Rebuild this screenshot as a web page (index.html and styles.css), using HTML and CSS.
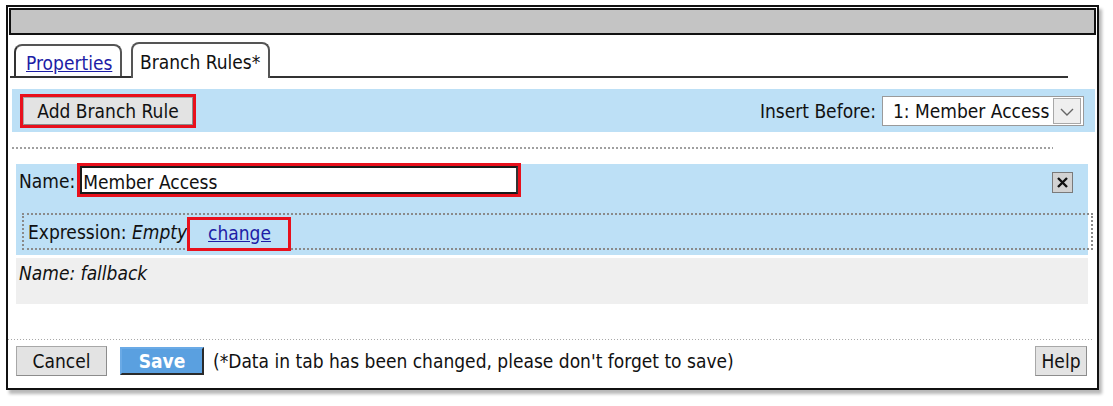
FILE: index.html
```html
<!DOCTYPE html>
<html>
<head>
<meta charset="utf-8">
<link rel="stylesheet" href="styles.css">
</head>
<body>
<div class="desk">
  <div class="dialog">
    <div class="titlebar"></div>
    <div class="tabs">
      <div class="tab tab-inactive"><a href="#" class="link">Properties</a></div>
      <div class="tab tab-active">Branch Rules*</div>
    </div>
    <div class="toolbar">
      <button class="btn btn-add hl">Add Branch Rule</button>
      <div class="insert">
        <span class="insert-label">Insert Before:</span>
        <div class="select">
          <span class="select-text">1: Member Access</span>
          <span class="select-arrow">
            <svg width="14" height="8" viewBox="0 0 14 8"><path d="M1 1 L7 7 L13 1" fill="none" stroke="#666" stroke-width="1.4"/></svg>
          </span>
        </div>
      </div>
    </div>
    <div class="dots dots-top"></div>
    <div class="rule">
      <div class="name-row">
        <span class="label">Name:</span>
        <div class="input-wrap hl-box"><div class="input">Member Access</div></div>
        <span class="close">
          <svg width="13" height="13" viewBox="0 0 13 13"><path d="M2 2 L11 11 M11 2 L2 11" stroke="#111" stroke-width="2.4"/></svg>
        </span>
      </div>
      <div class="expr">
        <span class="label">Expression: <i>Empty</i></span>
        <span class="change-wrap hl-box"><a href="#" class="link">change</a></span>
      </div>
    </div>
    <div class="fallback"><i>Name: fallback</i></div>
    <div class="dots dots-bottom"></div>
    <div class="footer">
      <button class="btn btn-cancel">Cancel</button>
      <button class="btn btn-save">Save</button>
      <span class="note">(*Data in tab has been changed, please don't forget to save)</span>
      <button class="btn btn-help">Help</button>
    </div>
  </div>
</div>
</body>
</html>
```
FILE: styles.css
```css
* { box-sizing: border-box; }
html, body { margin: 0; padding: 0; background: #fff; }
body {
  font-family: "DejaVu Sans Condensed", "DejaVu Sans", sans-serif;
  font-stretch: condensed;
  font-size: 19px;
  color: #111;
}
.desk { padding: 5px 0 0 6px; width: 1113px; height: 406px; overflow: hidden; }
.dialog {
  width: 1093px;
  height: 385px;
  border: 2px solid #111;
  background: #fff;
  box-shadow: 3px 4px 3px rgba(0,0,0,0.28);
  display: flex;
  flex-direction: column;
}
.titlebar {
  margin: 1px 1px 0 1px;
  height: 27px;
  border: 2px solid #111;
  background: #c4c4c4;
}
.tabs {
  margin: 9px 0 0 2px;
  width: 1058px;
  height: 34px;
  border-bottom: 2px solid #333;
  display: flex;
  align-items: flex-end;
  padding-left: 4px;
  gap: 9px;
}
.tab {
  height: 33px;
  border: 2px solid #555;
  border-bottom: none;
  border-radius: 8px 8px 0 0;
  padding: 6px 0 0 10px;
  background: #fff;
  white-space: nowrap;
}
.tab-inactive { width: 108px; height: 32px; border-left-color: #333; }
.tab-active { width: 139px; height: 36px; margin-bottom: -2px; padding-left: 7px; padding-top: 7px; }
.link { color: #1d1da6; text-decoration: underline; }
.toolbar {
  margin: 11px 2px 0 4px;
  height: 43px;
  background: #bde0f6;
  display: flex;
  align-items: center;
  justify-content: space-between;
  padding: 0 11px 0 11px;
}
.btn {
  font-family: inherit;
  font-stretch: condensed;
  font-size: 19px;
  color: #111;
  background: #e3e3e3;
  border: 1px solid #a8a8a8;
  border-right-color: #8c8c8c;
  border-bottom-color: #8c8c8c;
  padding: 0;
  cursor: default;
}
.btn-add { width: 170px; height: 28px; margin-top: 1px; }
.hl { outline: 3px solid #e8101c; outline-offset: 0; }
.insert { display: flex; align-items: center; gap: 6px; }
.select {
  width: 202px;
  height: 30px;
  background: #fff;
  border: 1px solid #9a9a9a;
  display: flex;
  align-items: center;
  justify-content: space-between;
  padding: 0 2px 0 10px;
}
.select-arrow {
  width: 28px;
  height: 26px;
  border: 1px solid #a8a8a8;
  background: #efefef;
  display: flex;
  align-items: center;
  justify-content: center;
  padding-top: 3px;
}
.dots {
  height: 2px;
  background: repeating-linear-gradient(90deg, #a0a0a0 0 2px, transparent 2px 4px);
}
.dots-top { margin: 15px 0 0 4px; width: 1041px; }
.rule {
  margin: 15px 0 0 8px;
  width: 1072px;
  background: #bde0f6;
  padding-bottom: 5px;
}
.name-row {
  display: flex;
  align-items: center;
  height: 34px;
  margin-top: -1px;
  padding-left: 3px;
}
.name-row .label { margin-right: 2px; padding-top: 2px; }
.hl-box { border: 3px solid #e8101c; }
.input-wrap { width: 444px; height: 34px; }
.input {
  height: 28px;
  border: 2px solid #1a1a1a;
  border-right-color: #333;
  background: #fff;
  padding: 2px 0 0 1px;
  line-height: 24px;
}
.close {
  margin-left: auto;
  margin-right: 15px;
  margin-top: 5px;
  width: 21px;
  height: 21px;
  border: 1px solid #7a7a7a;
  background: #d2d2d2;
  display: flex;
  align-items: center;
  justify-content: center;
}
.expr {
  margin: 16px -5px 0 6px;
  height: 37px;
  border: 2px dotted #8a8a8a;
  display: flex;
  align-items: center;
  padding-left: 4px;
}
.change-wrap {
  margin-left: 0;
  width: 104px;
  height: 34px;
  margin-top: 4px;
  padding: 2px 0 0 18px;
}
.fallback {
  margin: 3px 0 0 8px;
  width: 1072px;
  height: 46px;
  background: #efefef;
  padding: 4px 0 0 3px;
}
.dots-bottom { margin: 35px 0 0 0; width: 1084px; background: repeating-linear-gradient(90deg, #a8a8a8 0 1px, transparent 1px 3px); height: 1px; }
.footer {
  display: flex;
  align-items: center;
  margin-top: 6px;
  padding: 0 10px 0 8px;
}
.btn-cancel { width: 91px; height: 30px; }
.btn-save {
  width: 84px;
  height: 28px;
  margin-left: 13px;
  background: #5aa0e0;
  color: #fff;
  font-weight: bold;
  border: 2px solid #6aaae6;
  border-right-color: #2a2a2a;
  border-bottom-color: #2a2a2a;
}
.note { margin-left: 9px; }
.btn-help { margin-left: auto; width: 52px; height: 30px; }
```
